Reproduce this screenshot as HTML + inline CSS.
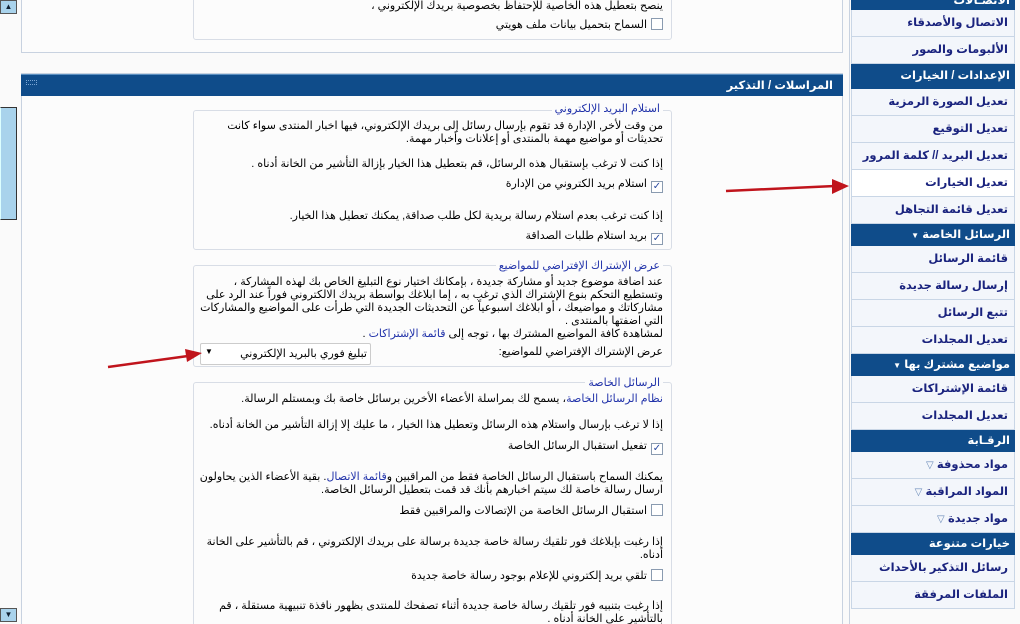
<!DOCTYPE html>
<html><head><meta charset="utf-8"><style>
*{box-sizing:border-box;margin:0;padding:0}
html,body{width:1020px;height:624px;overflow:hidden}
body{background:#fafafa;position:relative;font-family:"Liberation Sans","DejaVu Sans",sans-serif;font-size:11px;color:#000}
.abs{position:absolute}
.panel{position:absolute;left:21px;width:822px;border:1px solid #c8d2e0;background:#fcfcfc}
.fs{position:absolute;left:193px;width:479px;border:1px solid #d8dde6;border-radius:3px;background:#fcfcfc}
.ln{position:absolute;right:357px;direction:rtl;white-space:nowrap;line-height:13px}
.lg{color:#2233aa;background:#fcfcfc;padding:0 3px}
.cb{display:inline-block;width:12px;height:12px;border:1px solid #8a9bb0;background:#fff;vertical-align:-2px;margin-left:4px;font-size:10px;line-height:10px;text-align:center;color:#2a4aa0}
a{color:#2233aa;text-decoration:none}
.h{position:absolute;left:851px;width:164px;background:#0f4c8a;color:#fff;direction:rtl;font-weight:bold;padding-right:5px;font-size:11.5px}
.it{position:absolute;left:851px;width:164px;height:27px;background:#f3f6fb;border:1px solid #c9d6e6;border-top:none;color:#1a237e;direction:rtl;font-weight:bold;padding-right:6px;line-height:26px;font-size:11.5px}
</style></head><body>
<div class="abs" style="left:0;top:0;width:17px;height:14px;background:#a9d3ec;border:1px solid #555;font-size:8px;text-align:center;line-height:12px;color:#123">▲</div>
<div class="abs" style="left:0;top:107px;width:17px;height:113px;background:#a9d3ec;border:1px solid #333;border-left:1px solid #dff"></div>
<div class="abs" style="left:0;top:608px;width:17px;height:14px;background:#a9d3ec;border:1px solid #555;font-size:8px;text-align:center;line-height:12px;color:#123">▼</div>

<div class="panel" style="top:-2px;height:55px"></div>
<div class="fs" style="top:-4px;height:44px"></div>
<div class="ln" style="top:0px">ينصح بتعطيل هذه الخاصية للإحتفاظ بخصوصية بريدك الإلكتروني ،</div>
<div class="ln" style="top:18px"><span class="cb"></span>السماح بتحميل بيانات ملف هويتي</div>

<div class="panel" style="top:73px;height:560px"></div>
<div class="abs" style="left:21px;top:74px;width:822px;height:22px;background:#0f4c8a;border-top:1px solid #5b8fc0"></div>
<div class="abs" style="left:26px;top:80px;width:11px;height:5px;border:1px dotted #7aa6d4"></div>
<div class="abs" style="right:187px;top:78px;color:#fff;font-weight:bold;direction:rtl;font-size:11.5px">المراسلات / التذكير</div>

<div class="fs" style="top:110px;height:140px"></div>
<div class="ln" style="top:103px"><span class="lg">استلام البريد الإلكتروني</span></div>
<div class="ln" style="top:120px">من وقت لأخر, الإدارة قد تقوم بإرسال رسائل إلى بريدك الإلكتروني، فيها اخبار المنتدى سواء كانت</div>
<div class="ln" style="top:133px">تحديثات أو مواضيع مهمة بالمنتدى أو إعلانات وأخبار مهمة.</div>
<div class="ln" style="top:158px">إذا كنت لا ترغب بإستقبال هذه الرسائل، قم بتعطيل هذا الخيار بإزالة التأشير من الخانة أدناه .</div>
<div class="ln" style="top:178px"><span class="cb">✓</span>استلام بريد الكتروني من الإدارة</div>
<div class="ln" style="top:210px">إذا كنت ترغب بعدم استلام رسالة بريدية لكل طلب صداقة, يمكنك تعطيل هذا الخيار.</div>
<div class="ln" style="top:230px"><span class="cb">✓</span>بريد استلام طلبات الصداقة</div>

<div class="fs" style="top:265px;height:102px"></div>
<div class="ln" style="top:260px"><span class="lg">عرض الإشتراك الإفتراضي للمواضيع</span></div>
<div class="ln" style="top:276px">عند اضافة موضوع جديد أو مشاركة جديدة ، بإمكانك اختيار نوع التبليغ الخاص بك لهذه المشاركة ،</div>
<div class="ln" style="top:289px">وتستطيع التحكم بنوع الإشتراك الذي ترغب به ، إما ابلاغك بواسطة بريدك الالكتروني فوراً عند الرد على</div>
<div class="ln" style="top:302px">مشاركاتك و مواضيعك ، أو ابلاغك اسبوعياً عن التحديثات الجديدة التي طرأت على المواضيع والمشاركات</div>
<div class="ln" style="top:315px">التي اضفتها بالمنتدى .</div>
<div class="ln" style="top:328px">لمشاهدة كافة المواضيع المشترك بها ، توجه إلى <a>قائمة الإشتراكات</a> .</div>
<div class="ln" style="top:346px">عرض الإشتراك الإفتراضي للمواضيع:</div>
<div class="abs" style="left:200px;top:343px;width:171px;height:22px;border:1px solid #ccc;background:#fff;border-radius:2px"></div>
<div class="abs" style="left:205px;top:347px;font-size:8px">▼</div>
<div class="abs" style="right:653px;top:347px;direction:rtl;white-space:nowrap">تبليغ فوري بالبريد الإلكتروني</div>

<div class="fs" style="top:382px;height:260px"></div>
<div class="ln" style="top:377px"><span class="lg">الرسائل الخاصة</span></div>
<div class="ln" style="top:393px"><a>نظام الرسائل الخاصة</a>، يسمح لك بمراسلة الأعضاء الأخرين برسائل خاصة بك وبمستلم الرسالة.</div>
<div class="ln" style="top:419px">إذا لا ترغب بإرسال واستلام هذه الرسائل وتعطيل هذا الخيار ، ما عليك إلا إزالة التأشير من الخانة أدناه.</div>
<div class="ln" style="top:440px"><span class="cb">✓</span>تفعيل استقبال الرسائل الخاصة</div>
<div class="ln" style="top:471px">يمكنك السماح باستقبال الرسائل الخاصة فقط من المراقبين و<a>قائمة الاتصال</a>. بقية الأعضاء الذين يحاولون</div>
<div class="ln" style="top:484px">ارسال رسالة خاصة لك سيتم اخبارهم بأنك قد قمت بتعطيل الرسائل الخاصة.</div>
<div class="ln" style="top:504px"><span class="cb"></span>استقبال الرسائل الخاصة من الإتصالات والمراقبين فقط</div>
<div class="ln" style="top:536px">إذا رغبت بإبلاغك فور تلقيك رسالة خاصة جديدة برسالة على بريدك الإلكتروني ، قم بالتأشير على الخانة</div>
<div class="ln" style="top:549px">أدناه.</div>
<div class="ln" style="top:569px"><span class="cb"></span>تلقي بريد إلكتروني للإعلام بوجود رسالة خاصة جديدة</div>
<div class="ln" style="top:600px">إذا رغبت بتنبيه فور تلقيك رسالة خاصة جديدة أثناء تصفحك للمنتدى بظهور نافذة تنبيهية مستقلة ، قم</div>
<div class="ln" style="top:613px">بالتأشير على الخانة أدناه .</div>

<div class="abs" style="left:849px;top:0;width:1px;height:624px;background:#c8d2e0"></div>
<div class="h" style="top:-6px;height:16px;line-height:14px">الاتصـالات</div>
<div class="it" style="top:10px">الاتصال والأصدقاء</div>
<div class="it" style="top:37px">الألبومات والصور</div>
<div class="h" style="top:64px;height:25px;line-height:25px">الإعدادات / الخيارات</div>
<div class="it" style="top:89px">تعديل الصورة الرمزية</div>
<div class="it" style="top:116px">تعديل التوقيع</div>
<div class="it" style="top:143px">تعديل البريد // كلمة المرور</div>
<div class="it" style="top:170px;background:#fff">تعديل الخيارات</div>
<div class="it" style="top:197px">تعديل قائمة التجاهل</div>
<div class="h" style="top:224px;height:22px;line-height:22px">الرسائل الخاصة <span style="font-size:8px">▼</span></div>
<div class="it" style="top:246px">قائمة الرسائل</div>
<div class="it" style="top:273px">إرسال رسالة جديدة</div>
<div class="it" style="top:300px">تتبع الرسائل</div>
<div class="it" style="top:327px">تعديل المجلدات</div>
<div class="h" style="top:354px;height:22px;line-height:22px">مواضيع مشترك بها <span style="font-size:8px">▼</span></div>
<div class="it" style="top:376px">قائمة الإشتراكات</div>
<div class="it" style="top:403px">تعديل المجلدات</div>
<div class="h" style="top:430px;height:22px;line-height:22px">الرقـابة</div>
<div class="it" style="top:452px">مواد محذوفة <span style="color:#6a8ab8;font-size:10px">▽</span></div>
<div class="it" style="top:479px">المواد المراقبة <span style="color:#6a8ab8;font-size:10px">▽</span></div>
<div class="it" style="top:506px">مواد جديدة <span style="color:#6a8ab8;font-size:10px">▽</span></div>
<div class="h" style="top:533px;height:22px;line-height:22px">خيارات متنوعة</div>
<div class="it" style="top:555px">رسائل التذكير بالأحداث</div>
<div class="it" style="top:582px">الملفات المرفقة</div>

<svg class="abs" style="left:0;top:0" width="1020" height="624">
<line x1="726" y1="191" x2="835" y2="186" stroke="#c0141c" stroke-width="2.5"/>
<polygon points="832,179 849,186 832,194" fill="#c0141c"/>
<line x1="108" y1="367" x2="188" y2="356" stroke="#c0141c" stroke-width="2.5"/>
<polygon points="185,349 202,353 187,362" fill="#c0141c"/>
</svg>
</body></html>
